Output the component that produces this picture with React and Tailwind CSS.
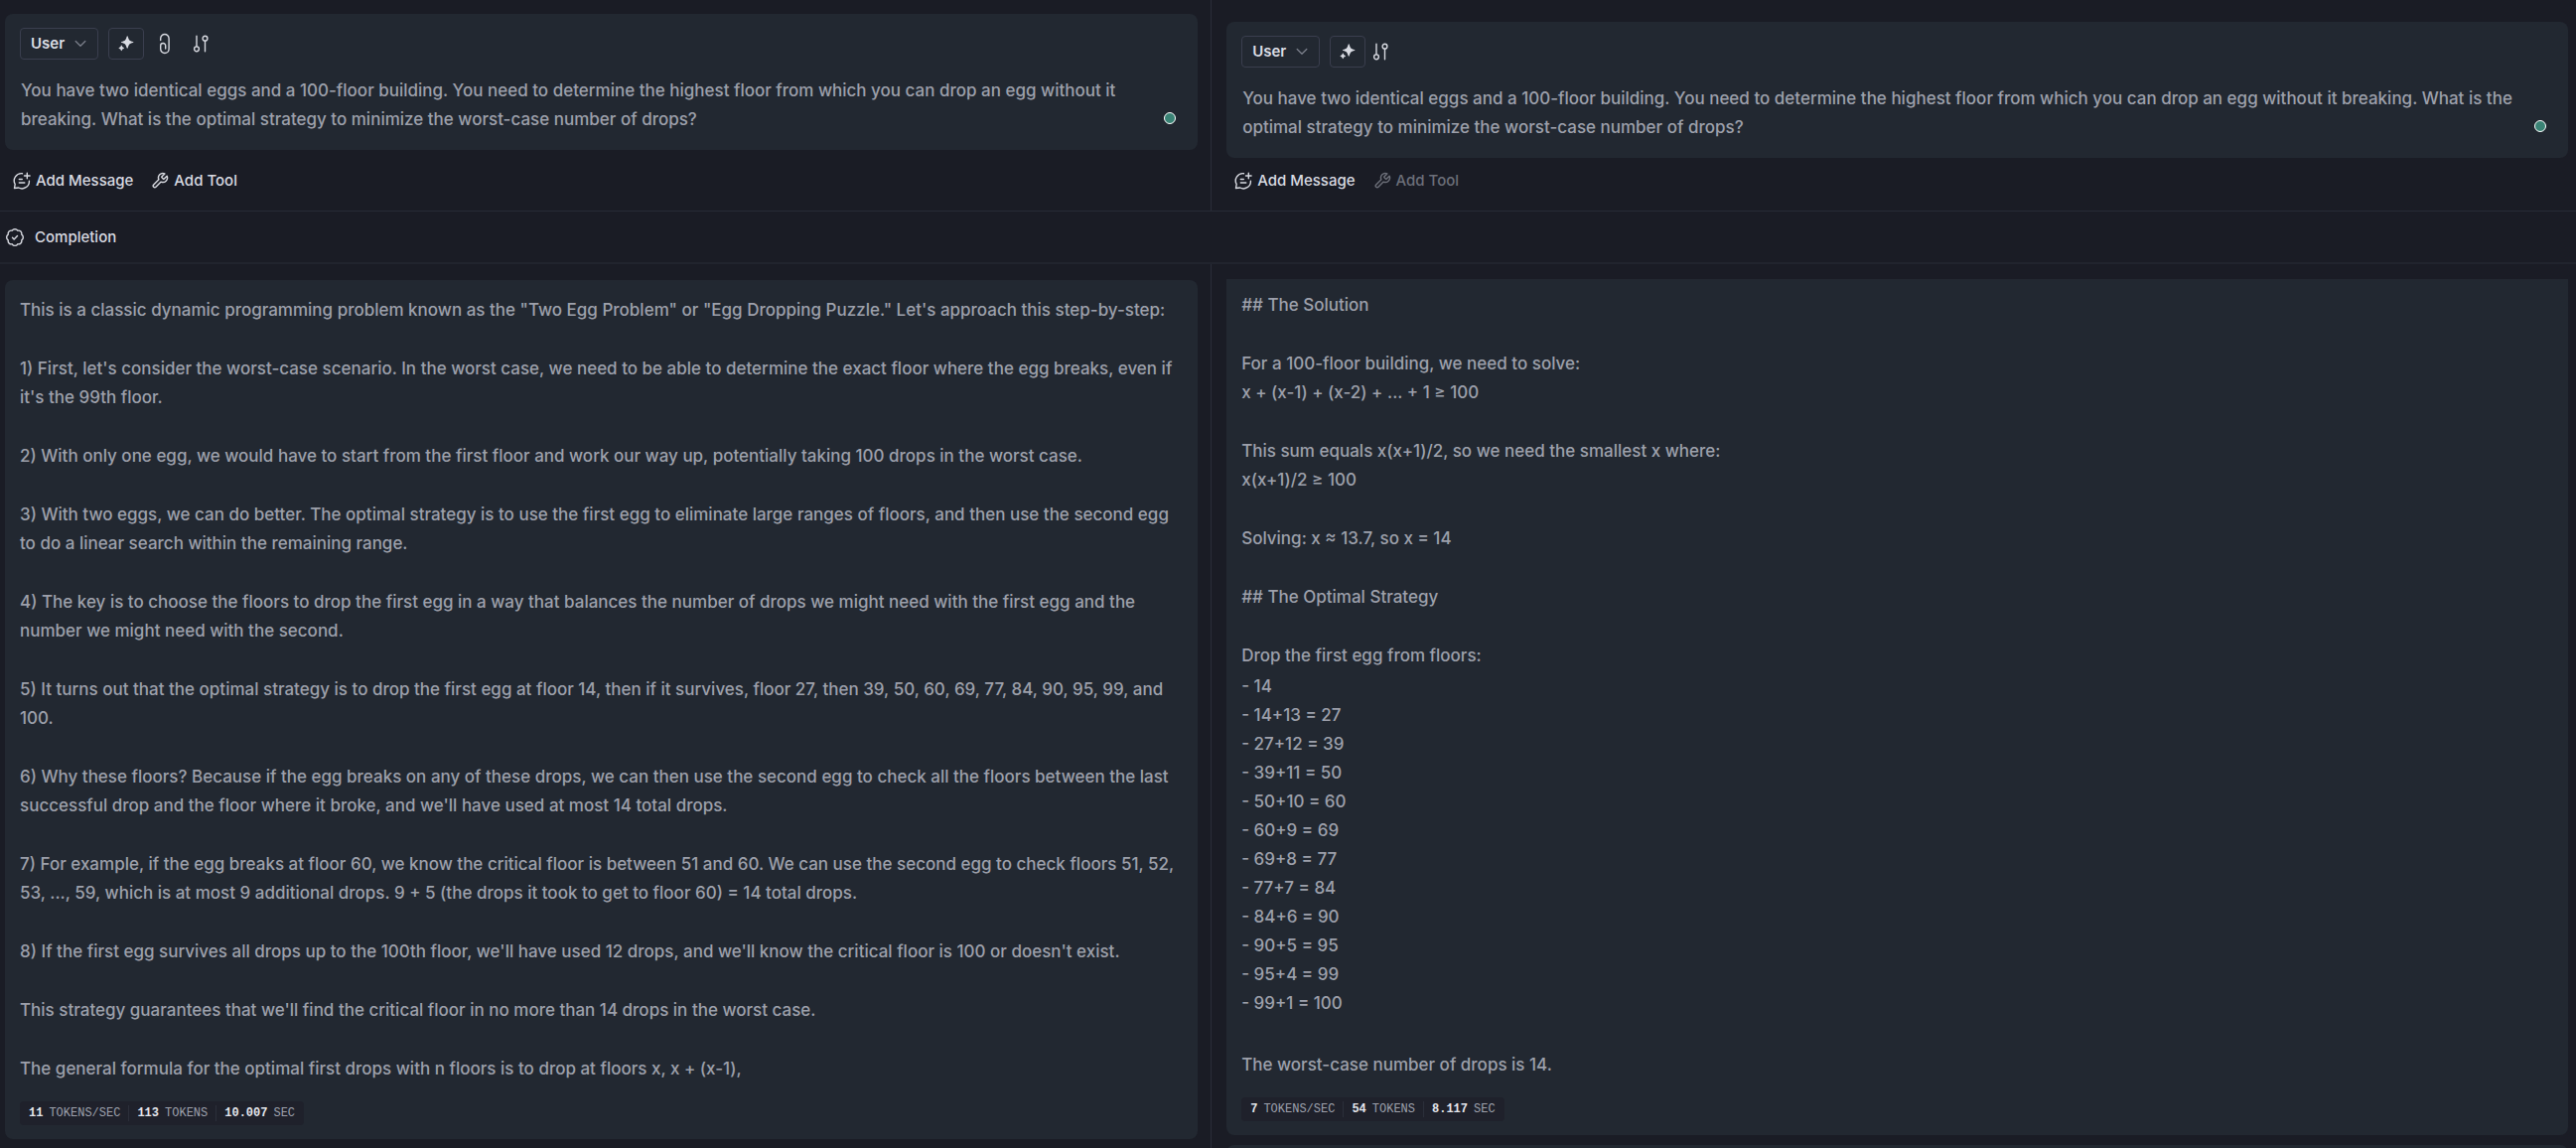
import React from 'react'

const PROMPT =
  'You have two identical eggs and a 100-floor building. You need to determine the highest floor from which you can drop an egg without it breaking. What is the optimal strategy to minimize the worst-case number of drops?'

const leftParagraphs = [
  'This is a classic dynamic programming problem known as the "Two Egg Problem" or "Egg Dropping Puzzle." Let\'s approach this step-by-step:',
  "1) First, let's consider the worst-case scenario. In the worst case, we need to be able to determine the exact floor where the egg breaks, even if it's the 99th floor.",
  '2) With only one egg, we would have to start from the first floor and work our way up, potentially taking 100 drops in the worst case.',
  '3) With two eggs, we can do better. The optimal strategy is to use the first egg to eliminate large ranges of floors, and then use the second egg to do a linear search within the remaining range.',
  '4) The key is to choose the floors to drop the first egg in a way that balances the number of drops we might need with the first egg and the number we might need with the second.',
  '5) It turns out that the optimal strategy is to drop the first egg at floor 14, then if it survives, floor 27, then 39, 50, 60, 69, 77, 84, 90, 95, 99, and 100.',
  "6) Why these floors? Because if the egg breaks on any of these drops, we can then use the second egg to check all the floors between the last successful drop and the floor where it broke, and we'll have used at most 14 total drops.",
  '7) For example, if the egg breaks at floor 60, we know the critical floor is between 51 and 60. We can use the second egg to check floors 51, 52, 53, ..., 59, which is at most 9 additional drops. 9 + 5 (the drops it took to get to floor 60) = 14 total drops.',
  "8) If the first egg survives all drops up to the 100th floor, we'll have used 12 drops, and we'll know the critical floor is 100 or doesn't exist.",
  "This strategy guarantees that we'll find the critical floor in no more than 14 drops in the worst case.",
  'The general formula for the optimal first drops with n floors is to drop at floors x, x + (x-1),'
]

const rightParagraphs = [
  '## The Solution',
  'For a 100-floor building, we need to solve:\nx + (x-1) + (x-2) + ... + 1 ≥ 100',
  'This sum equals x(x+1)/2, so we need the smallest x where:\nx(x+1)/2 ≥ 100',
  'Solving: x ≈ 13.7, so x = 14',
  '## The Optimal Strategy'
]

const floors = [
  '14',
  '14+13 = 27',
  '27+12 = 39',
  '39+11 = 50',
  '50+10 = 60',
  '60+9 = 69',
  '69+8 = 77',
  '77+7 = 84',
  '84+6 = 90',
  '90+5 = 95',
  '95+4 = 99',
  '99+1 = 100'
]

const strokeProps = {
  fill: 'none',
  stroke: 'currentColor',
  strokeLinecap: 'round',
  strokeLinejoin: 'round',
  'aria-hidden': true
}

const ChevronIcon = () => (
  <svg width="12" height="8" viewBox="0 0 12 8" strokeWidth="1.3" {...strokeProps}>
    <path d="M1.2 1.5 6 6.300l4.800-4.800" />
  </svg>
)

const SparkleIcon = () => (
  <svg width="16" height="16" viewBox="0 0 16 16" fill="currentColor" aria-hidden="true">
    <path d="M9.200.3c.3 0 .5.2.6.6.8 3.200 1.800 4.200 5 5 .8.2.8 1 0 1.200-3.200.8-4.200 1.800-5 5-.2.8-1 .8-1.200 0-.8-3.200-1.800-4.200-5-5-.8-.2-.8-1 0-1.200 3.200-.8 4.200-1.800 5-5 .1-.4.3-.6.6-.6Z" />
    <path d="M3.300 9.600c.3 0 .4.2.5.5.3 1.100.7 1.500 1.800 1.800.6.2.6.8 0 1-1.100.3-1.500.7-1.800 1.800-.2.6-.8.6-1 0-.3-1.100-.7-1.500-1.800-1.800-.6-.2-.6-.8 0-1 1.100-.3 1.500-.7 1.800-1.800.1-.3.2-.5.5-.5Z" />
  </svg>
)

const PaperclipIcon = () => (
  <svg width="12" height="22" viewBox="0 0 12 22" strokeWidth="1.4" {...strokeProps}>
    <path d="M1.700 7.500V5.700a4.200 4.200 0 0 1 8.400 0v10.600a4.200 4.200 0 0 1-8.400 0v-3.300a2.500 2.500 0 0 1 5 0v3" />
  </svg>
)

const SlidersIcon = () => (
  <svg width="16" height="18" viewBox="0 0 16 18" strokeWidth="1.4" {...strokeProps}>
    <path d="M4 1.200v10.600M12.500 6.200v10.600" />
    <circle cx="4" cy="14.300" r="2.400" />
    <circle cx="12.500" cy="3.700" r="2.400" />
  </svg>
)

const AddMessageIcon = () => (
  <svg width="18" height="18" viewBox="0 0 18 18" strokeWidth="1.400" {...strokeProps}>
    <path d="M9.500 1.700A7.300 7.300 0 0 0 2.200 12.500L1.500 16.500l4.200-.5A7.300 7.300 0 0 0 16.400 9.200" />
    <path d="M6.300 7.500h3M6.300 11h5.500M14.300 1.200v5.600M11.500 4h5.600" />
  </svg>
)

const WrenchIcon = () => (
  <svg width="18" height="18" viewBox="0 0 24 24" strokeWidth="1.900" {...strokeProps}>
    <path d="M14.700 6.300a1 1 0 0 0 0 1.400l1.600 1.600a1 1 0 0 0 1.400 0l3.770-3.770a6 6 0 0 1-7.940 7.940l-6.910 6.910a2.120 2.120 0 0 1-3-3l6.910-6.910a6 6 0 0 1 7.940-7.940l-3.760 3.760z" />
  </svg>
)

const BadgeIcon = () => (
  <svg width="20" height="20" viewBox="0 0 24 24" strokeWidth="1.700" {...strokeProps}>
    <path d="M3.850 8.620a4 4 0 0 1 4.780-4.770 4 4 0 0 1 6.740 0 4 4 0 0 1 4.780 4.780 4 4 0 0 1 0 6.740 4 4 0 0 1-4.770 4.780 4 4 0 0 1-6.750 0 4 4 0 0 1-4.780-4.770 4 4 0 0 1 0-6.760Z" />
    <path d="m9 12.300 2 2 4-4" />
  </svg>
)

const IconButton = ({ label, children }) => (
  <button type="button" aria-label={label} className="flex h-8 items-center justify-center">
    {children}
  </button>
)

const MessageCard = ({ id, hasAttachment }) => (
  <div className="relative rounded-lg bg-[#222831] px-[15px] pt-3.5 pb-4">
    <div className="flex items-center">
      <div className="grid items-center">
        <select
          aria-label="Role"
          defaultValue="User"
          className="col-start-1 row-start-1 h-8 w-[79px] appearance-none rounded border border-[#3a3e4e] bg-transparent pl-2.5 text-[15px] font-semibold text-[#dcdee5]"
        >
          <option>User</option>
          <option>Assistant</option>
        </select>
        <span className="pointer-events-none col-start-1 row-start-1 mr-3 justify-self-end text-[#7a7e8a]">
          <ChevronIcon />
        </span>
      </div>
      <button
        type="button"
        aria-label="Improve prompt"
        className="ml-2.5 flex h-8 w-9 items-center justify-center rounded border border-[#3a3e4e]"
      >
        <SparkleIcon />
      </button>
      <div className={hasAttachment ? 'ml-[15px] flex gap-[22px]' : 'ml-[7px] flex'}>
        {hasAttachment && (
          <IconButton label="Attach file">
            <PaperclipIcon />
          </IconButton>
        )}
        <IconButton label="Parameters">
          <SlidersIcon />
        </IconButton>
      </div>
    </div>
    <textarea
      id={id}
      aria-label="Message"
      rows={2}
      defaultValue={PROMPT}
      className="mt-[17px] block w-full resize-none overflow-hidden bg-transparent pr-9 pl-px text-[17px] leading-[29px] font-[450] text-[#9da0ab] outline-none"
    />
    <span className="absolute right-[22px] bottom-[26px] size-3 rounded-full border border-white bg-[#3a8375]" />
  </div>
)

const MessageActions = ({ toolDisabled }) => (
  <div className="mt-auto flex gap-[18px] pb-5 pl-2 text-[15px] leading-5 font-[450]">
    <button type="button" className="flex items-center gap-[5px]">
      <AddMessageIcon />
      Add Message
    </button>
    <button
      type="button"
      disabled={toolDisabled}
      className={toolDisabled ? 'flex items-center gap-[5px] text-[#6c6f79]' : 'flex items-center gap-[5px]'}
    >
      <WrenchIcon />
      Add Tool
    </button>
  </div>
)

const Stats = ({ items }) => (
  <div className="mt-[18px] flex h-6 w-fit items-center divide-x divide-[#2b2f3a] rounded bg-[#1f212b] px-px font-['Liberation_Mono',monospace] text-xs">
    {items.map(([value, unit]) => (
      <span key={unit} className="flex h-4 items-center gap-1.5 px-2 text-[#9da0ab]">
        <b className="text-[#e4e6ec]">{value}</b>
        {unit}
      </span>
    ))}
  </div>
)

const App = () => {
  return (
    <main className="flex h-screen flex-col overflow-hidden bg-[#1a1c25] font-['Inter',sans-serif] text-[#d8dae1]">
      <section className="grid shrink-0 grid-cols-[47fr_53fr] border-b border-[#272b37]">
        <div className="flex flex-col gap-[21px] pt-3.5 pr-[13px] pl-[5px]">
          <MessageCard id="prompt-a" hasAttachment />
          <MessageActions />
        </div>
        <div className="flex flex-col gap-[13px] border-l border-[#2a2d39] pt-[22px] pr-2 pl-[15px]">
          <MessageCard id="prompt-b" />
          <MessageActions toolDisabled />
        </div>
      </section>

      <header className="flex h-[53px] shrink-0 items-center gap-2.5 border-b-2 border-[#21242e] pt-px pl-[5px]">
        <BadgeIcon />
        <h2 className="text-[15px] font-medium">Completion</h2>
      </header>

      <section className="grid min-h-0 flex-1 grid-cols-[47fr_53fr] text-[17px] leading-[29px] font-[450] text-[#9da0ab]">
        <div className="pt-4 pr-[13px] pl-[5px]">
          <article className="rounded-lg bg-[#222831] px-[15px] pt-4 pb-3.5">
            <div className="flex flex-col gap-[30px]">
              {leftParagraphs.map((text) => (
                <p key={text}>{text}</p>
              ))}
            </div>
            <Stats items={[['11', 'TOKENS/SEC'], ['113', 'TOKENS'], ['10.007', 'SEC']]} />
          </article>
        </div>

        <div className="border-l border-[#2a2d39] pt-[15px] pr-2 pl-[15px]">
          <article className="rounded-b-lg bg-[#222831] px-[15px] pt-3 pb-3.5">
            <div className="flex flex-col gap-[30px]">
              {rightParagraphs.map((text) => (
                <p key={text} className="whitespace-pre-line">
                  {text}
                </p>
              ))}
              <div>
                <p>Drop the first egg from floors:</p>
                <ul className="pt-0.5 pb-[3px]">
                  {floors.map((floor) => (
                    <li key={floor}>- {floor}</li>
                  ))}
                </ul>
              </div>
              <p>The worst-case number of drops is 14.</p>
            </div>
            <Stats items={[['7', 'TOKENS/SEC'], ['54', 'TOKENS'], ['8.117', 'SEC']]} />
          </article>
          <div className="mt-2.5 h-8 rounded-t-lg bg-[#222831]" />
        </div>
      </section>
    </main>
  )
}

export default App
